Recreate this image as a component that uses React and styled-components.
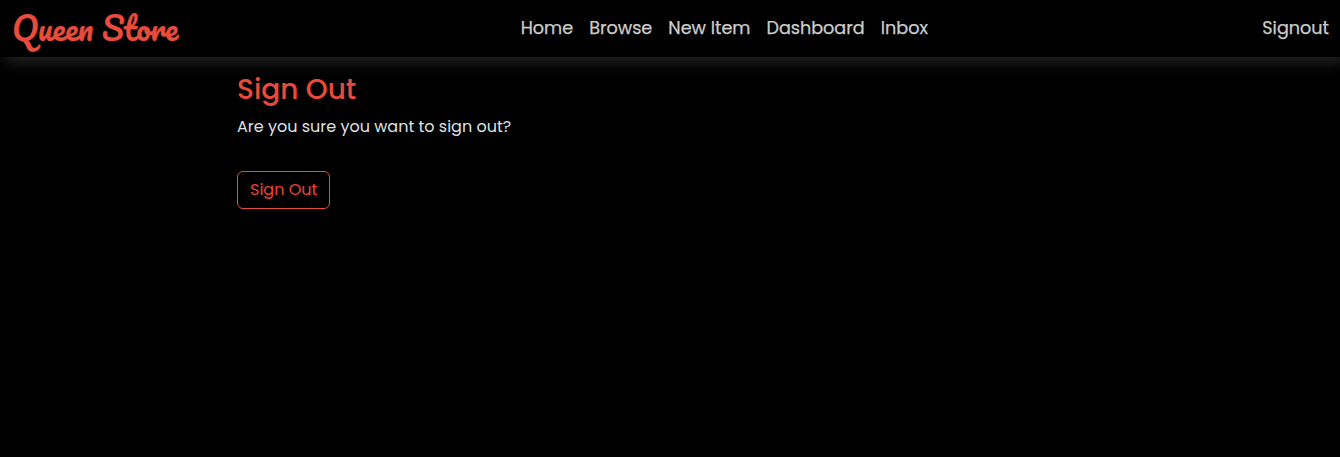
import React from 'react';
import styled, { createGlobalStyle } from 'styled-components';

const Global = createGlobalStyle`
  *, *::before, *::after { box-sizing: border-box; }
  body {
    margin: 0;
    min-height: 100vh;
    background: #000;
    color: #dee2e6;
    font: 400 16px/24px Poppins, Inter, sans-serif;
  }
`;

const Navbar = styled.header`
  display: flex;
  align-items: center;
  justify-content: space-between;
  height: 57px;
  padding: 0 11px 0 12px;
  background: #000;
  box-shadow: 5px 5px 15px rgba(255, 255, 255, 0.15);
`;

const Brand = styled.a`
  margin-right: 8px;
  padding-bottom: 3px;
  color: #e74c3c;
  font: 400 32px/48px Pacifico, cursive;
  -webkit-text-stroke: 0.2px currentColor;
  white-space: nowrap;
`;

const Menu = styled.nav`
  display: flex;
  gap: 16px;
`;

const NavLink = styled.a`
  color: #ccc;
  font-size: 17.6px;
  line-height: 26.4px;
  -webkit-text-stroke: 0.25px currentColor;
  white-space: nowrap;
`;

const Content = styled.main`
  width: 866px;
  margin: 0 auto;
  padding-top: 16px;
`;

const Title = styled.h1`
  margin: 0 0 8px;
  color: #eb4a3a;
  font-size: 28px;
  font-weight: 500;
  line-height: 33.6px;
`;

const Prompt = styled.p`
  margin: 0 0 32px;
`;

const Button = styled.button`
  height: 38px;
  padding: 0 12px;
  border: 1px solid #e74c3c;
  border-radius: 6px;
  background: transparent;
  color: #f04432;
  font: inherit;
`;

const links = ['Home', 'Browse', 'New Item', 'Dashboard', 'Inbox'];

export default function App() {
  return (
    <>
      <Global />
      <Navbar>
        <Brand>Queen Store</Brand>
        <Menu>
          {links.map((label) => (
            <NavLink key={label}>{label}</NavLink>
          ))}
        </Menu>
        <NavLink>Signout</NavLink>
      </Navbar>
      <Content>
        <Title>Sign Out</Title>
        <Prompt>Are you sure you want to sign out?</Prompt>
        <Button>Sign Out</Button>
      </Content>
    </>
  );
}
